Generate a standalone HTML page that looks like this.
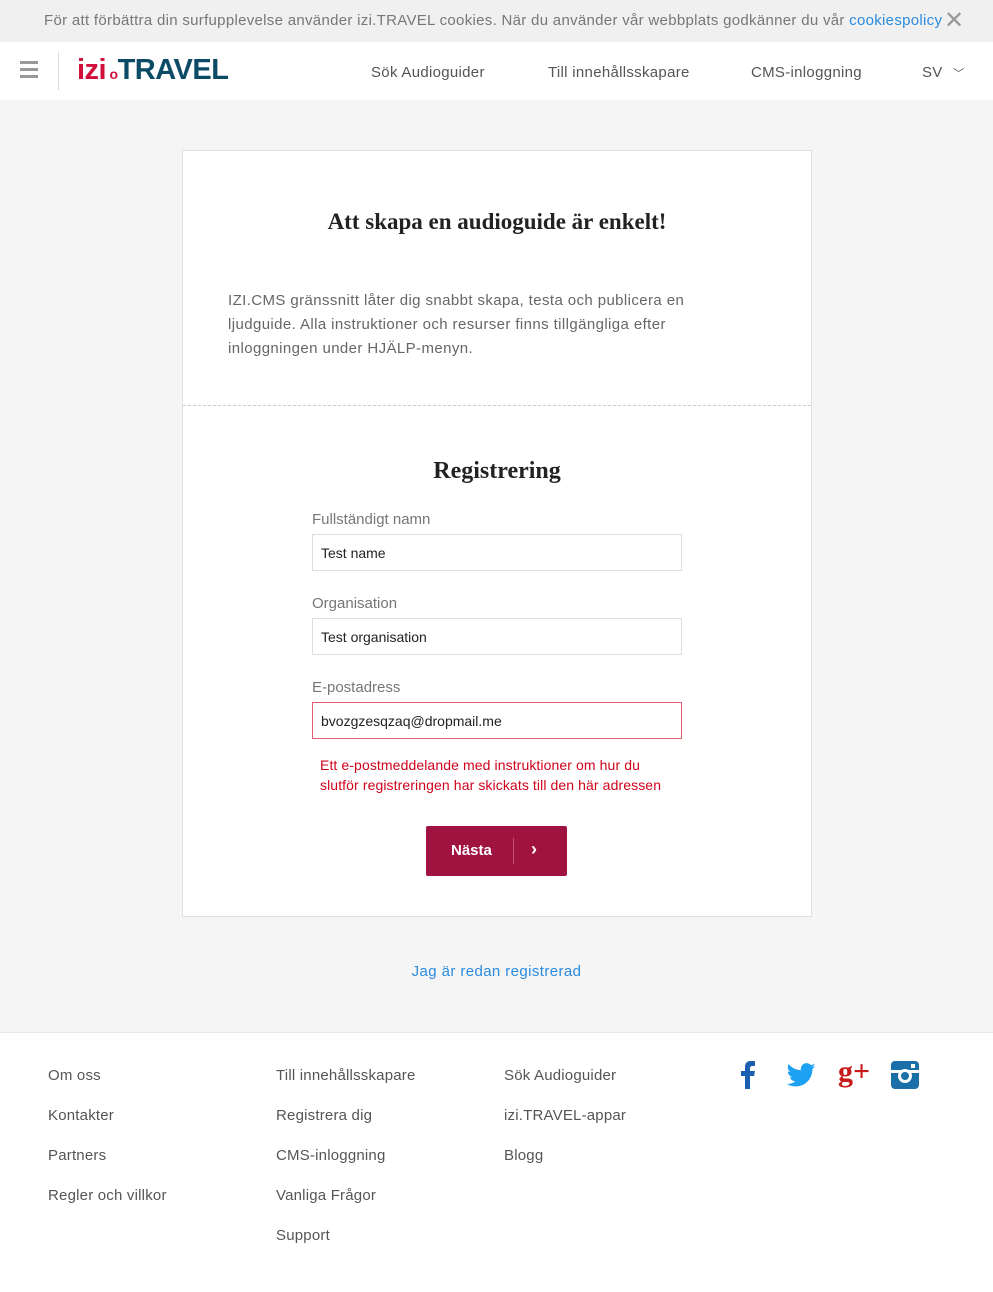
<!DOCTYPE html>
<html><head><meta charset="utf-8"><style>
*{box-sizing:border-box;margin:0;padding:0}
body{width:993px;height:1292px;background:#f5f5f5;font-family:"Liberation Sans",sans-serif;color:#555;position:relative;overflow:hidden}
.cookie{height:42px;background:#f0f0f0;font-size:15px;color:#777;line-height:42px;padding-left:44px;position:relative;letter-spacing:0.3px;white-space:nowrap}
.cookie a{color:#2a8be0;text-decoration:none}
.cookie .x{position:absolute;left:944px;top:0;font-size:24px;color:#999}
.hdr{position:absolute;top:42px;left:0;width:993px;height:58px;background:#fff}
.burger{position:absolute;left:20px;top:19px;width:18px}
.burger i{display:block;height:3px;background:#999;margin-bottom:4px}
.sep{position:absolute;left:58px;top:10px;width:1px;height:38px;background:#ddd}
.logo{position:absolute;left:77px;top:12px;font-size:29px;font-weight:bold;letter-spacing:-0.5px}
.nav{position:absolute;top:22px;font-size:15px;color:#555;letter-spacing:0.3px}
.card{position:absolute;left:182px;top:150px;width:630px;height:767px;background:#fff;border:1px solid #e0e0e0}
h1,h2{font-family:"Liberation Serif",serif;color:#222;text-align:center;font-weight:bold;position:absolute;width:100%}
.intro{position:absolute;left:45px;top:138px;width:500px;font-size:15px;line-height:24px;color:#666;letter-spacing:0.4px}
.dash{position:absolute;left:0;top:254px;width:100%;border-top:1px dashed #ccc}
.lbl{position:absolute;left:129px;font-size:15px;color:#777}
.inp{position:absolute;left:129px;width:370px;height:37px;border:1px solid #ddd;font-size:14px;color:#222;padding:10px 8px}
.err{position:absolute;left:137px;top:604px;font-size:14px;color:#d0021b;line-height:20px;letter-spacing:0.1px}
.btn{position:absolute;left:243px;top:675px;width:141px;height:50px;background:#a0123f;border-radius:2px;color:#fff;font-weight:bold;font-size:15px}
.foot{position:absolute;top:1032px;left:0;width:993px;height:260px;background:#fff;border-top:1px solid #e8e8e8}
.fl{position:absolute;font-size:15px;color:#555;letter-spacing:0.2px}
</style></head><body>
<div class="cookie">För att förbättra din surfupplevelse använder izi.TRAVEL cookies. När du använder vår webbplats godkänner du vår <a>cookiespolicy</a><span class="x">✕</span></div>
<div class="hdr">
<div class="burger"><i></i><i></i><i></i></div>
<div class="sep"></div>
<div class="logo"><span style="color:#d0103a">izi</span><span style="color:#d0103a;font-size:14px"> o</span><span style="color:#0b4b66">TRAVEL</span></div>
<div class="nav" style="left:371px">Sök Audioguider</div>
<div class="nav" style="left:548px">Till innehållsskapare</div>
<div class="nav" style="left:751px">CMS-inloggning</div>
<div class="nav" style="left:922px">SV <span style="font-size:11px;margin-left:6px">﹀</span></div>
</div>
<div class="card">
<h1 style="top:58px;font-size:23px">Att skapa en audioguide är enkelt!</h1>
<div class="intro">IZI.CMS gränssnitt låter dig snabbt skapa, testa och publicera en ljudguide. Alla instruktioner och resurser finns tillgängliga efter inloggningen under HJÄLP-menyn.</div>
<div class="dash"></div>
<h2 style="top:307px;font-size:24px">Registrering</h2>
<div class="lbl" style="top:360px">Fullständigt namn</div>
<div class="inp" style="top:383px">Test name</div>
<div class="lbl" style="top:444px">Organisation</div>
<div class="inp" style="top:467px">Test organisation</div>
<div class="lbl" style="top:528px">E-postadress</div>
<div class="inp" style="top:551px;border-color:#e06070">bvozgzesqzaq@dropmail.me</div>
<div class="err">Ett e-postmeddelande med instruktioner om hur du<br>slutför registreringen har skickats till den här adressen</div>
<div class="btn"><span style="position:absolute;left:25px;top:16px">Nästa</span><span style="position:absolute;left:87px;top:12px;width:1px;height:26px;background:#c0506f"></span><span style="position:absolute;left:105px;top:13px;font-size:18px">›</span></div>
</div>
<div style="position:absolute;top:963px;left:0;width:993px;text-align:center;font-size:15px;color:#2a8be0;letter-spacing:0.4px">Jag är redan registrerad</div>
<div class="foot">
<div class="fl" style="left:48px;top:34px">Om oss</div>
<div class="fl" style="left:48px;top:74px">Kontakter</div>
<div class="fl" style="left:48px;top:114px">Partners</div>
<div class="fl" style="left:48px;top:154px">Regler och villkor</div>
<div class="fl" style="left:276px;top:34px">Till innehållsskapare</div>
<div class="fl" style="left:276px;top:74px">Registrera dig</div>
<div class="fl" style="left:276px;top:114px">CMS-inloggning</div>
<div class="fl" style="left:276px;top:154px">Vanliga Frågor</div>
<div class="fl" style="left:276px;top:194px">Support</div>
<div class="fl" style="left:504px;top:34px">Sök Audioguider</div>
<div class="fl" style="left:504px;top:74px">izi.TRAVEL-appar</div>
<div class="fl" style="left:504px;top:114px">Blogg</div>
<svg style="position:absolute;left:738px;top:28px" width="20" height="28" viewBox="0 0 20 28"><path d="M7 28V15H3v-5h4V6c0-4 2-6 6-6h4v5h-3c-1 0-2 1-2 2v3h5l-1 5h-4v13z" fill="#1b5fb0"/></svg>
<svg style="position:absolute;left:786px;top:30px" width="30" height="24" viewBox="0 0 24 20"><path d="M24 2.4c-.9.4-1.8.7-2.8.8 1-.6 1.8-1.6 2.2-2.7-1 .6-2 1-3.1 1.2A4.9 4.9 0 0 0 11.9 6 14 14 0 0 1 1.7.9a4.9 4.9 0 0 0 1.5 6.6c-.8 0-1.6-.3-2.2-.6 0 2.4 1.7 4.400 3.900 4.800-.7.2-1.500.2-2.200.1.6 2 2.400 3.400 4.600 3.400A9.900 9.900 0 0 1 0 17.300 14 14 0 0 0 7.500 19.500c9 0 14-7.500 14-14v-.6c1-.7 1.800-1.600 2.500-2.500z" fill="#1da1f2"/></svg>
<div style="position:absolute;left:838px;top:22px;font-family:'Liberation Serif',serif;font-size:30px;color:#c81a1a;font-weight:bold">g+</div>
<svg style="position:absolute;left:891px;top:28px" width="28" height="28" viewBox="0 0 28 28"><rect width="28" height="28" rx="4" fill="#1a6fa8"/><rect x="0" y="9" width="28" height="3" fill="#fff"/><circle cx="14" cy="15" r="7" fill="#fff"/><circle cx="14" cy="15" r="4" fill="#1a6fa8"/><rect x="20" y="3" width="4" height="4" fill="#fff"/></svg>
</div>
</body></html>
